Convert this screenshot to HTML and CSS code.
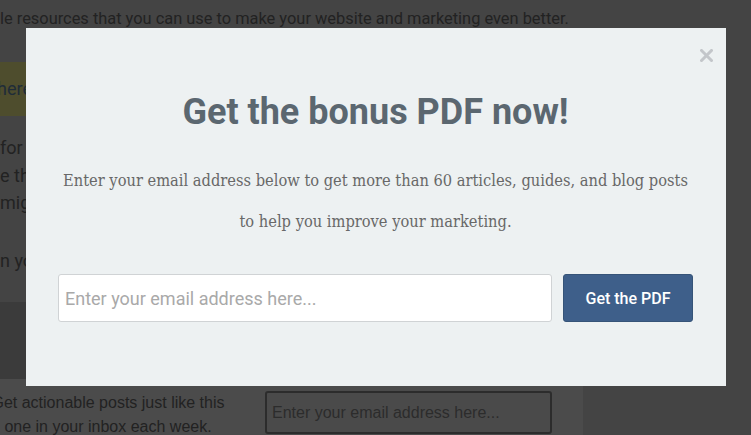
FILE: index.html
```html
<!DOCTYPE html>
<html lang="en">
<head>
  <meta charset="UTF-8">
  <meta name="viewport" content="width=device-width, initial-scale=1.0">
  <title>Get the bonus PDF</title>
  <link rel="stylesheet" href="styles.css">
</head>
<body>
  <!-- Page behind the popup (already dimmed) -->
  <div class="page">
    <div class="article">
      <p class="intro">Here is a list of the most useful and helpful tools you can put to work<br>le resources that you can use to make your website and marketing even better.</p>
      <div class="callout"><a href="#">here</a> to grab the full list</div>
      <p class="body-text">for<br>e that<br>might</p>
      <p class="body-text">n your</p>
    </div>
    <div class="band"></div>
    <div class="subscribe">
      <p class="subscribe-text">Get actionable posts just like this<br>one in your inbox each week.</p>
      <input class="subscribe-input" type="text" placeholder="Enter your email address here...">
    </div>
  </div>

  <!-- Popup -->
  <div class="overlay">
    <div class="modal">
      <button class="close" aria-label="Close">
        <svg width="13" height="13" viewBox="0 0 13 13"><path d="M1.5 1.5 L11.5 11.5 M11.5 1.5 L1.5 11.5" stroke="#c3c6ca" stroke-width="3" stroke-linecap="square"/></svg>
      </button>
      <h2 class="modal-title">Get the bonus PDF now!</h2>
      <p class="modal-text">Enter your email address below to get more than 60 articles, guides, and blog posts<br>to help you improve your marketing.</p>
      <form class="modal-form" onsubmit="return false">
        <input class="email" type="email" placeholder="Enter your email address here...">
        <button class="submit" type="submit">Get the PDF</button>
      </form>
    </div>
  </div>
</body>
</html>
```

FILE: styles.css
```css
html, body {
  margin: 0;
  height: 100%;
}
body {
  background-color: #444;
  font-family: Roboto, "Liberation Sans", sans-serif;
  overflow: hidden;
}
/* Background page */
.page {
  width: 583px;
  height: 435px;
  overflow: hidden;
}
.article {
  height: 302px;
  overflow: hidden;
}
.intro {
  margin: -22px 0 0 0;
  font-size: 16.4px;
  line-height: 27px;
  color: #222;
  white-space: nowrap;
}
.callout {
  margin-top: 30px;
  height: 54px;
  line-height: 54px;
  background-color: #4e4d2d;
  font-size: 18px;
  color: #222;
  white-space: nowrap;
}
.callout a {
  margin-left: -3px;
  color: #1f2c38;
  text-decoration: none;
}
.body-text {
  margin: 18px 0 0 0;
  font-size: 18px;
  line-height: 27.5px;
  color: #222;
}
.body-text + .body-text {
  margin-top: 30px;
}
.band {
  height: 77px;
  background-color: #3b3b3b;
}
.subscribe {
  display: flex;
  align-items: flex-start;
  height: 56px;
  overflow: hidden;
  background-color: #4b4b4b;
}
.subscribe-text {
  flex: none;
  width: 250px;
  margin: 12px 0 0 -17px;
  font-family: "Liberation Sans", Arial, sans-serif;
  font-size: 16px;
  line-height: 24px;
  text-align: center;
  white-space: nowrap;
  color: #222;
}
.subscribe-input {
  flex: none;
  margin: 12px 0 0 32px;
  width: 287px;
  height: 43px;
  box-sizing: border-box;
  padding: 0 5px;
  background-color: #4a4a4a;
  border: 2px solid #2c2c2c;
  border-radius: 3px;
  font-family: "Liberation Sans", Arial, sans-serif;
  font-size: 16px;
}
.subscribe-input::placeholder {
  color: #2c2c2c;
}
/* Popup */
.overlay {
  position: fixed;
  top: 0;
  left: 0;
  right: 0;
  bottom: 0;
  display: flex;
  justify-content: center;
  align-items: flex-start;
  padding-top: 28px;
}
.modal {
  position: relative;
  width: 700px;
  box-sizing: border-box;
  padding: 62px 0 64px;
  background-color: #edf1f2;
  text-align: center;
}
.close {
  position: absolute;
  top: 21px;
  right: 13px;
  padding: 0;
  border: none;
  background: none;
  line-height: 0;
  cursor: pointer;
}
.modal-title {
  margin: 0;
  font-size: 36px;
  line-height: 44px;
  font-weight: 700;
  color: #5b6770;
}
.modal-text {
  margin: 26px 0 0;
  font-family: "DejaVu Serif", "Liberation Serif", serif;
  font-stretch: condensed;
  font-size: 16.3px;
  line-height: 41px;
  color: #686868;
}
.modal-form {
  display: flex;
  justify-content: center;
  gap: 11px;
  margin-top: 32px;
}
.email {
  flex: none;
  width: 494px;
  height: 48px;
  box-sizing: border-box;
  padding: 0 6px;
  background-color: #fff;
  border: 1px solid #d0d3d5;
  border-radius: 3px;
  font-family: Roboto, sans-serif;
  font-size: 18px;
  color: #555;
}
.email::placeholder {
  color: #a9a9a9;
}
.submit {
  flex: none;
  width: 130px;
  height: 48px;
  background-color: #3e5f8a;
  border: 1px solid #365478;
  border-radius: 3px;
  font-family: Roboto, sans-serif;
  font-size: 16px;
  font-weight: 500;
  color: #fff;
  cursor: pointer;
}
```
